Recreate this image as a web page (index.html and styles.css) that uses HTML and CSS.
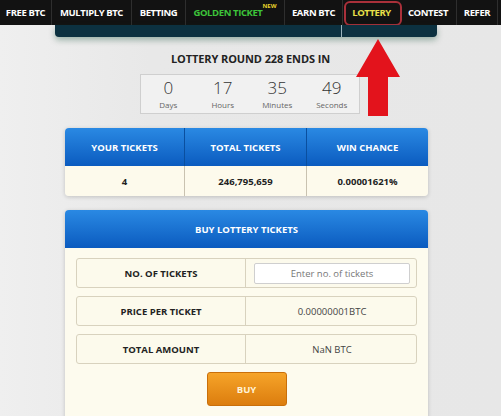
FILE: index.html
```html
<!DOCTYPE html>
<html>
<head>
<meta charset="utf-8">
<link rel="stylesheet" href="styles.css">
</head>
<body>
<nav class="nav">
  <a class="nav-item w1">FREE BTC</a>
  <a class="nav-item w2">MULTIPLY BTC</a>
  <a class="nav-item w3">BETTING</a>
  <a class="nav-item w4 golden">GOLDEN TICKET<sup class="new">NEW</sup></a>
  <a class="nav-item w5">EARN BTC</a>
  <a class="nav-item w6 active">LOTTERY</a>
  <a class="nav-item w7">CONTEST</a>
  <a class="nav-item w8">REFER</a>
  <span class="highlight"></span>
</nav>
<div class="subbar"><span class="subbar-line"></span></div>

<svg class="arrow" width="46" height="78" viewBox="0 0 46 78">
  <polygon points="23,0 45,38 33,38 33,77 13,77 13,38 1,38" fill="#e3131c"/>
</svg>

<main class="main">
  <h1 class="round-title">LOTTERY ROUND 228 ENDS IN</h1>
  <div class="countdown">
    <div class="cd-cell"><span class="cd-num">0</span><span class="cd-lbl">Days</span></div>
    <div class="cd-cell"><span class="cd-num">17</span><span class="cd-lbl">Hours</span></div>
    <div class="cd-cell"><span class="cd-num">35</span><span class="cd-lbl">Minutes</span></div>
    <div class="cd-cell"><span class="cd-num">49</span><span class="cd-lbl">Seconds</span></div>
  </div>

  <div class="card stats">
    <div class="stats-head">
      <div class="sc">YOUR TICKETS</div>
      <div class="sc">TOTAL TICKETS</div>
      <div class="sc">WIN CHANCE</div>
    </div>
    <div class="stats-row">
      <div class="sc">4</div>
      <div class="sc">246,795,659</div>
      <div class="sc">0.00001621%</div>
    </div>
  </div>

  <div class="card buy">
    <div class="buy-head">BUY LOTTERY TICKETS</div>
    <div class="buy-body">
      <div class="frow">
        <div class="flabel">NO. OF TICKETS</div>
        <div class="fval"><input class="finput" type="text" placeholder="Enter no. of tickets"></div>
      </div>
      <div class="frow">
        <div class="flabel">PRICE PER TICKET</div>
        <div class="fval">0.00000001BTC</div>
      </div>
      <div class="frow">
        <div class="flabel">TOTAL AMOUNT</div>
        <div class="fval">NaN BTC</div>
      </div>
      <button class="buy-btn">BUY</button>
    </div>
  </div>
</main>
</body>
</html>
```
FILE: styles.css
```css
* { box-sizing: border-box; }
html, body { margin: 0; padding: 0; }
body {
  width: 501px;
  height: 416px;
  overflow: hidden;
  background: linear-gradient(90deg, #efefef 0, #e8e8e8 30%, #e7e7e7 100%);
  font-family: "Open Sans", "DejaVu Sans", sans-serif;
  color: #222;
  position: relative;
}
.nav {
  display: flex;
  height: 25px;
  background: #121212;
  position: relative;
}
.nav-item {
  display: flex;
  align-items: center;
  justify-content: center;
  height: 25px;
  color: #fff;
  font-weight: 700;
  font-size: 9.5px;
  letter-spacing: -0.4px;
  border-right: 1px solid #2e2e2e;
  white-space: nowrap;
}
.w1 { width: 52px; }
.w2 { width: 80px; }
.w3 { width: 54px; }
.w4 { width: 99px; }
.w5 { width: 58px; }
.w6 { width: 57px; border-right: none; }
.w7 { width: 57px; }
.w8 { width: 41px; }
.golden { color: #3dc43a; }
.new {
  color: #e6d12a;
  font-size: 6px;
  letter-spacing: 0;
  align-self: flex-start;
  margin-top: 2px;
  vertical-align: top;
}
.active { color: #e9e04a; }
.highlight {
  position: absolute;
  left: 344px;
  top: 1px;
  width: 58px;
  height: 25px;
  border: 2px solid #a9303a;
  border-radius: 6px;
}
.subbar {
  margin-left: 55px;
  width: 382px;
  height: 12px;
  background: #0c3140;
  border-radius: 0 0 4px 4px;
  box-shadow: 0 3px 6px rgba(0, 70, 40, 0.35);
  position: relative;
}
.subbar-line {
  position: absolute;
  left: 286px;
  top: 0;
  width: 1px;
  height: 12px;
  background: #9ab3bd;
}
.arrow {
  position: absolute;
  left: 355px;
  top: 39px;
}
.main {
  display: flex;
  flex-direction: column;
  align-items: flex-start;
}
.round-title {
  margin: 14px 0 0 0;
  width: 501px;
  text-align: center;
  font-size: 11px;
  font-weight: 700;
  letter-spacing: -0.1px;
  line-height: 16px;
}
.countdown {
  margin: 7px 0 0 140px;
  width: 220px;
  height: 40px;
  border: 1px solid #cfcfcf;
  background: #f1f1f1;
  display: grid;
  grid-template-columns: repeat(4, 1fr);
  align-items: center;
  padding-bottom: 3px;
}
.cd-cell {
  display: flex;
  flex-direction: column;
  align-items: center;
}
.cd-num {
  font-size: 17px;
  font-weight: 300;
  line-height: 23px;
  color: #333;
}
.cd-lbl {
  font-size: 8px;
  line-height: 11px;
  color: #666;
}
.card {
  margin-left: 65px;
  width: 363px;
  border-radius: 4px;
  overflow: hidden;
  box-shadow: 0 1px 4px rgba(0, 0, 0, 0.18);
}
.stats { margin-top: 14px; }
.stats-head {
  display: grid;
  grid-template-columns: 120px 122px 121px;
  height: 38px;
  background: linear-gradient(#2a89e3, #0b5bbf);
  color: #fff;
}
.stats-row {
  display: grid;
  grid-template-columns: 120px 122px 121px;
  height: 30px;
  background: #fdfaec;
  color: #222;
}
.sc {
  display: flex;
  align-items: center;
  justify-content: center;
  font-size: 9.5px;
  font-weight: 700;
  border-right: 1px solid #c9c2b0;
}
.stats-head .sc { border-right-color: #0a4f9f; }
.sc:last-child { border-right: none; }
.buy { margin-top: 14px; height: 220px; }
.buy-head {
  height: 38px;
  background: linear-gradient(#2a89e3, #0b5bbf);
  color: #fff;
  font-weight: 700;
  font-size: 9.5px;
  display: flex;
  align-items: center;
  justify-content: center;
}
.buy-body {
  background: #fdfbee;
  padding: 10px 11px 20px 11px;
  display: flex;
  flex-direction: column;
  align-items: center;
  gap: 8px;
  height: 182px;
}
.frow {
  width: 341px;
  height: 30px;
  display: grid;
  grid-template-columns: 169px 172px;
  border: 1px solid #d8d2be;
  border-radius: 3px;
  background: #fcfaec;
}
.flabel {
  display: flex;
  align-items: center;
  justify-content: center;
  font-weight: 700;
  font-size: 9.5px;
  color: #222;
  border-right: 1px solid #d8d2be;
}
.fval {
  display: flex;
  align-items: center;
  justify-content: center;
  font-size: 9.5px;
  color: #444;
}
.finput {
  width: 156px;
  height: 21px;
  border: 1px solid #cfcfcf;
  border-radius: 2px;
  background: #fff;
  text-align: center;
  font-family: "Open Sans", "DejaVu Sans", sans-serif;
  font-size: 9.5px;
  padding: 0;
}
.finput::placeholder { color: #777; }
.buy-btn {
  width: 80px;
  height: 34px;
  border: 1px solid #c96f0a;
  border-radius: 3px;
  background: linear-gradient(#f6a429, #dc7d0e);
  color: #fff3d6;
  font-family: "Open Sans", "DejaVu Sans", sans-serif;
  font-weight: 700;
  font-size: 9.5px;
  padding: 0;
}
```
